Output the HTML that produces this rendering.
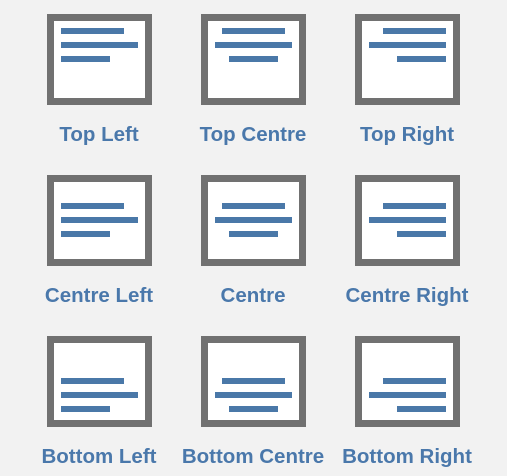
<html><head><style>
body{margin:0;width:507px;height:476px;background:#f2f2f2;position:relative;font-family:"Liberation Sans",sans-serif;overflow:hidden}
.b{position:absolute;width:91px;height:77px;border:7px solid #717171;background:#fff;box-sizing:content-box}
.l{position:absolute;height:6px;background:#4a78a8}
.t{position:absolute;width:154px;text-align:center;color:#4a78ab;font-weight:bold;font-size:20.5px}
</style></head><body>
<script>
const cols=[47,201,355],rows=[14,175,336];
const names=[["Top Left","Top Centre","Top Right"],["Centre Left","Centre","Centre Right"],["Bottom Left","Bottom Centre","Bottom Right"]];
const vo=[7,21,35];const widths=[63,77,49];
let h='';
rows.forEach((y,r)=>cols.forEach((x,c)=>{
 h+=`<div class="b" style="left:${x}px;top:${y}px">`;
 for(let i=0;i<3;i++){let w=widths[i];let left=c==0?7:c==1?(91-w)/2:84-w;let top=vo[i]+r*14;
 h+=`<div class="l" style="left:${left}px;top:${top}px;width:${w}px"></div>`;}
 h+=`</div><div class="t" style="left:${x-25}px;top:${y+109}px">${names[r][c]}</div>`;
}));
document.write(h);
</script>
</body></html>
